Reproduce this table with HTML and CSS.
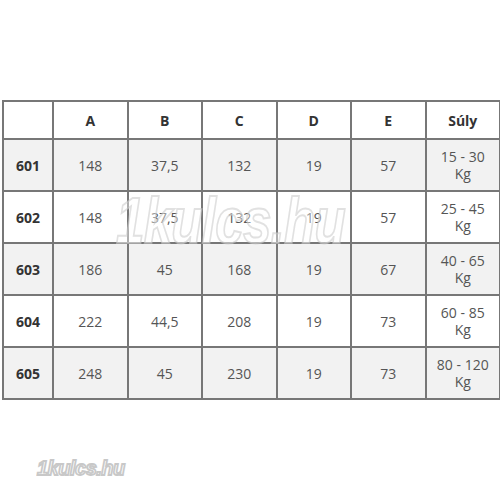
FILE: index.html
```html
<!DOCTYPE html>
<html>
<head>
<meta charset="utf-8">
<link rel="stylesheet" href="styles.css">
</head>
<body>
<div class="page">
  <table class="sizes">
    <colgroup>
      <col class="c0"><col class="c1"><col class="c1"><col class="c1"><col class="c1"><col class="c1"><col class="c1">
    </colgroup>
    <thead>
      <tr class="head"><th></th><th>A</th><th>B</th><th>C</th><th>D</th><th>E</th><th>Súly</th></tr>
    </thead>
    <tbody>
      <tr class="grey"><th>601</th><td>148</td><td>37,5</td><td>132</td><td>19</td><td>57</td><td>15 - 30<br>Kg</td></tr>
      <tr class="white"><th>602</th><td>148</td><td>37,5</td><td>132</td><td>19</td><td>57</td><td>25 - 45<br>Kg</td></tr>
      <tr class="grey"><th>603</th><td>186</td><td>45</td><td>168</td><td>19</td><td>67</td><td>40 - 65<br>Kg</td></tr>
      <tr class="white"><th>604</th><td>222</td><td>44,5</td><td>208</td><td>19</td><td>73</td><td>60 - 85<br>Kg</td></tr>
      <tr class="grey"><th>605</th><td>248</td><td>45</td><td>230</td><td>19</td><td>73</td><td>80 - 120<br>Kg</td></tr>
    </tbody>
  </table>
  <div class="mark-big">1kulcs.hu</div>
  <div class="mark-small">1kulcs.hu</div>
</div>
</body>
</html>
```

FILE: styles.css
```css
html, body {
  margin: 0;
  padding: 0;
  background: #ffffff;
}
.page {
  position: relative;
  width: 500px;
  height: 500px;
  overflow: hidden;
  padding-top: 100px;
  padding-left: 2px;
  box-sizing: border-box;
  font-family: "Open Sans", "Liberation Sans", sans-serif;
}
.sizes {
  border-collapse: collapse;
  table-layout: fixed;
  width: 497px;
}
.c0 { width: 50px; }
.c1 { width: 74.5px; }
.sizes th, .sizes td {
  border: 2px solid #777777;
  text-align: center;
  vertical-align: middle;
  font-size: 14px;
  line-height: 17px;
  padding: 0;
}
.sizes th {
  font-weight: 700;
  color: #333333;
}
.sizes td {
  color: #555555;
}
.head { height: 38px; background: #ffffff; }
.grey { height: 52px; background: #f2f2f2; }
.white { height: 52px; background: #ffffff; }
.mark-big {
  position: absolute;
  left: 116px;
  top: 184px;
  font-family: "Liberation Sans", sans-serif;
  font-weight: 700;
  font-style: italic;
  font-size: 64px;
  letter-spacing: -1px;
  transform: scaleX(0.8);
  transform-origin: left top;
  color: rgba(255, 255, 255, 0.4);
  -webkit-text-stroke: 2px rgba(200, 200, 200, 0.55);
  pointer-events: none;
}
.mark-small {
  position: absolute;
  left: 37px;
  top: 456px;
  font-family: "Liberation Sans", sans-serif;
  font-weight: 700;
  font-style: italic;
  font-size: 21px;
  letter-spacing: -0.5px;
  transform: scaleX(0.95);
  transform-origin: left top;
  color: #ffffff;
  -webkit-text-stroke: 1.8px #c8c8c8;
}
```
